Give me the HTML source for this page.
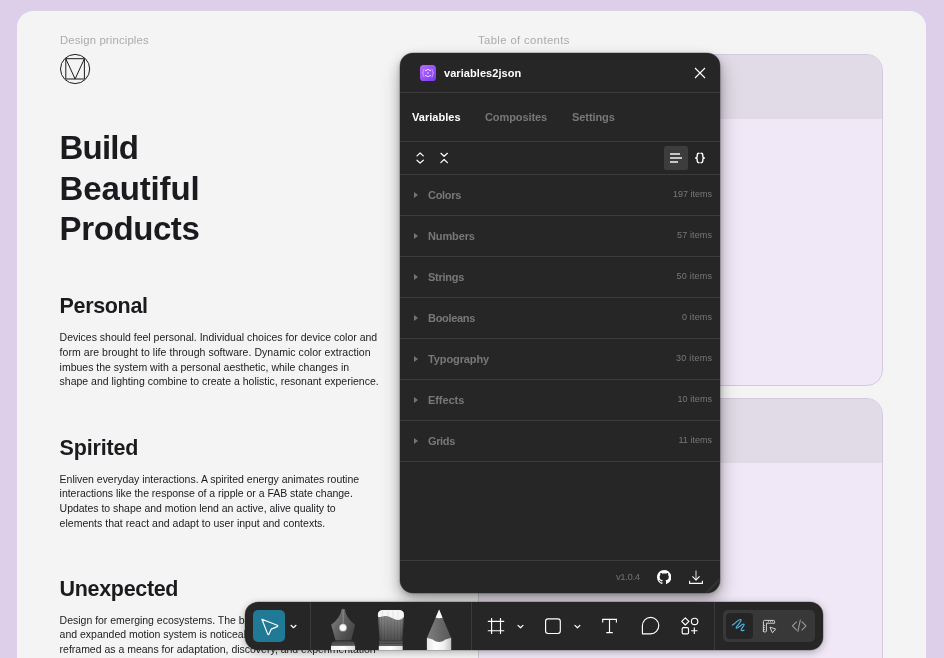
<!DOCTYPE html>
<html><head><meta charset="utf-8">
<style>
*{box-sizing:border-box;margin:0;padding:0}
html,body{width:944px;height:658px;overflow:hidden;background:#ddcfe9;font-family:"Liberation Sans",sans-serif;}
.abs{position:absolute}
#page{position:absolute;left:17px;top:11px;width:909px;height:700px;background:#f4f4f4;border-radius:16px;}
.lbl{position:absolute;font-size:11.3px;color:#acacac;white-space:nowrap;line-height:14px}
.ln{position:absolute;left:59.6px;white-space:nowrap;color:#1b1b1f}
.h1{font-size:33px;line-height:40px;font-weight:700}
.h2{font-size:21.5px;line-height:26px;font-weight:700}
.p{font-size:10.5px;line-height:14px}
.card{position:absolute;left:478px;width:405px;background:#f0e8f6;border:1px solid #d3cadc;border-radius:16px;overflow:hidden}
.card .hd{height:64px;background:#e1dae7}
#plug{position:absolute;left:400px;top:53px;width:320px;height:540px;background:#262626;border-radius:13px;box-shadow:0 0 0 .5px rgba(0,0,0,.35),0 2px 5px rgba(0,0,0,.2),0 6px 14px rgba(0,0,0,.23),0 10px 24px rgba(0,0,0,.16);overflow:hidden;color:#fff}
.sep{position:absolute;left:0;width:320px;height:1px;background:#3b3b3b}
.t{position:absolute;white-space:nowrap;font-size:11px;line-height:14px}
.b{font-weight:700}
.g{color:#787878}
.it{position:absolute;white-space:nowrap;font-size:9px;line-height:12px;color:#787878}
.tri{position:absolute;left:14px;width:0;height:0;border-left:4px solid #757575;border-top:3px solid transparent;border-bottom:3px solid transparent}
#tb{position:absolute;left:245px;top:602px;width:578px;height:48px;background:#262626;border-radius:13px;box-shadow:0 2px 8px rgba(0,0,0,.3),0 0 0 .5px rgba(0,0,0,.3);overflow:hidden}
.vs{position:absolute;top:0;width:1px;height:48px;background:#3a3a3a}
</style></head><body>
<div id="page"></div>
<div id="wrap" style="position:absolute;left:0;top:0;width:944px;height:658px;will-change:transform;opacity:.999">
<span id="l1" class="lbl" style="left:60px;top:33.4px;letter-spacing:0.161px">Design principles</span>
<span id="l2" class="lbl" style="left:478px;top:33.4px;letter-spacing:0.374px">Table of contents</span>
<svg class="abs" style="left:59px;top:53px" width="32" height="32" viewBox="0 0 32 32" fill="none" stroke="#1b1b1f" stroke-width="1"><circle cx="16.1" cy="16" r="14.6"/><path d="M6.8 5.7H25.4V26H6.8ZM6.8 5.7L16.1 26L25.4 5.7"/></svg>

<span id="h1a" class="ln h1" style="top:128px;letter-spacing:-0.820px">Build</span>
<span id="h1b" class="ln h1" style="top:168.5px;letter-spacing:-0.146px">Beautiful</span>
<span id="h1c" class="ln h1" style="top:209px;letter-spacing:-0.404px">Products</span>

<span id="h2a" class="ln h2" style="top:293px;letter-spacing:-0.346px">Personal</span>
<span id="p1a" class="ln p" style="top:330px;letter-spacing:0.001px">Devices should feel personal. Individual choices for device color and</span>
<span id="p1b" class="ln p" style="top:344.8px;letter-spacing:0.052px">form are brought to life through software. Dynamic color extraction</span>
<span id="p1c" class="ln p" style="top:359.6px;letter-spacing:0.000px">imbues the system with a personal aesthetic, while changes in</span>
<span id="p1d" class="ln p" style="top:374.4px;letter-spacing:-0.003px">shape and lighting combine to create a holistic, resonant experience.</span>

<span id="h2b" class="ln h2" style="top:434.5px;letter-spacing:-0.177px">Spirited</span>
<span id="p2a" class="ln p" style="top:471.5px;letter-spacing:-0.017px">Enliven everyday interactions. A spirited energy animates routine</span>
<span id="p2b" class="ln p" style="top:486.3px;letter-spacing:-0.024px">interactions like the response of a ripple or a FAB state change.</span>
<span id="p2c" class="ln p" style="top:501.1px;letter-spacing:-0.020px">Updates to shape and motion lend an active, alive quality to</span>
<span id="p2d" class="ln p" style="top:515.9px;letter-spacing:0.012px">elements that react and adapt to user input and contexts.</span>

<span id="h2c" class="ln h2" style="top:575.5px;letter-spacing:-0.330px">Unexpected</span>
<span id="p3a" class="ln p" style="top:612.6px;letter-spacing:-0.010px">Design for emerging ecosystems. The bold color palette</span>
<span id="p3b" class="ln p" style="top:627.4px;letter-spacing:-0.010px">and expanded motion system is noticeable, deliberately</span>
<span id="p3c" class="ln p" style="top:642.1px;letter-spacing:-0.010px">reframed as a means for adaptation, discovery, and experimentation</span>

<div class="card" style="top:54px;height:332px"><div class="hd"></div></div>
<div class="card" style="top:398px;height:332px"><div class="hd"></div></div>

<div id="plug">
  <svg class="abs" style="left:20px;top:12px" width="16" height="16" viewBox="0 0 16 16"><defs><linearGradient id="pg" x1="0" y1="0" x2="1" y2="1"><stop offset="0" stop-color="#b36dff"/><stop offset=".55" stop-color="#9550f8"/><stop offset="1" stop-color="#7838ee"/></linearGradient></defs><rect width="16" height="16" rx="3.6" fill="url(#pg)"/><g fill="none" stroke-linecap="round"><g stroke="#d2b0ff" stroke-width=".85"><path d="M4.2 4.3C3.4 4.3 3.3 4.8 3.3 5.4V6.9C3.3 7.6 2.9 8 2.3 8C2.9 8 3.3 8.4 3.3 9.1V10.6C3.3 11.2 3.4 11.7 4.2 11.7"/><path d="M11.8 4.3C12.6 4.3 12.7 4.8 12.7 5.4V6.9C12.7 7.6 13.1 8 13.7 8C13.1 8 12.7 8.4 12.7 9.1V10.6C12.7 11.2 12.6 11.7 11.8 11.7"/></g><path d="M5.3 5.6Q8 3 10.7 5.6M5.3 10.5Q8 13.1 10.7 10.5" stroke="#f1e4ff" stroke-width="1"/></g><circle cx="7.9" cy="8" r="1.05" fill="#cfa8ff"/></svg>
  <span id="ttl" class="t b" style="left:44px;top:13px;letter-spacing:0.066px">variables2json</span>
  <svg class="abs" style="left:294px;top:13.9px" width="12" height="12" viewBox="0 0 12 12" stroke="#fff" stroke-width="1.1" fill="none"><path d="M1 1L11 11M11 1L1 11"/></svg>
  <div class="sep" style="top:39px"></div>
  <span id="t1" class="t b" style="left:12px;top:57px;letter-spacing:0.034px">Variables</span>
  <span id="t2" class="t b g" style="left:85px;top:57px;letter-spacing:-0.097px">Composites</span>
  <span id="t3" class="t b g" style="left:172px;top:57px;letter-spacing:-0.072px">Settings</span>
  <div class="sep" style="top:88px"></div>
  <svg class="abs" style="left:0;top:89px" width="320" height="32" viewBox="0 89 320 32" fill="none" stroke="#fff" stroke-width="1.2" stroke-linecap="round" stroke-linejoin="round"><path d="M17 102.9L20.1 100L23.3 102.9M17 107.2L20.1 110.1L23.3 107.2"/><path d="M40.9 100.3L44.1 103.3L47.4 100.3M40.8 109.6L44.1 106.5L47.4 109.6"/><rect x="264" y="93" width="24" height="24" rx="2.5" fill="#3d3d3d" stroke="none"/><path d="M270 100.9H280M270 104.9H282M270 108.9H278" stroke="#c6c6c6" stroke-width="2" stroke-linecap="butt"/><path d="M299 100.2C297.6 100.2 297.2 100.8 297.2 101.9V103.5C297.2 104.5 296.7 105 295.6 105C296.7 105 297.2 105.5 297.2 106.5V108.1C297.2 109.2 297.6 109.8 299 109.8M301 100.2C302.4 100.2 302.8 100.8 302.8 101.9V103.5C302.8 104.5 303.3 105 304.4 105C303.3 105 302.8 105.5 302.8 106.5V108.1C302.8 109.2 302.4 109.8 301 109.8" stroke-width="1.4"/></svg>
  <div class="sep" style="top:121px"></div>
  <i class="tri" style="top:139px"></i><span id="r1" class="t b g" style="left:28px;top:135px;letter-spacing:-0.289px">Colors</span><div class="sep" style="top:162px"></div>
  <i class="tri" style="top:180px"></i><span id="r2" class="t b g" style="left:28px;top:176px;letter-spacing:-0.115px">Numbers</span><div class="sep" style="top:203px"></div>
  <i class="tri" style="top:221px"></i><span id="r3" class="t b g" style="left:28px;top:217px;letter-spacing:-0.268px">Strings</span><div class="sep" style="top:244px"></div>
  <i class="tri" style="top:262px"></i><span id="r4" class="t b g" style="left:28px;top:258px;letter-spacing:-0.317px">Booleans</span><div class="sep" style="top:285px"></div>
  <i class="tri" style="top:303px"></i><span id="r5" class="t b g" style="left:28px;top:299px;letter-spacing:-0.105px">Typography</span><div class="sep" style="top:326px"></div>
  <i class="tri" style="top:344px"></i><span id="r6" class="t b g" style="left:28px;top:340px;letter-spacing:-0.065px">Effects</span><div class="sep" style="top:367px"></div>
  <i class="tri" style="top:385px"></i><span id="r7" class="t b g" style="left:28px;top:381px;letter-spacing:-0.359px">Grids</span><div class="sep" style="top:408px"></div>
  <span id="i1" class="it" style="left:273px;top:135px;letter-spacing:-0.004px">197 items</span>
  <span id="i2" class="it" style="left:277px;top:176px;letter-spacing:0.141px">57 items</span>
  <span id="i3" class="it" style="left:276.6px;top:217px;letter-spacing:0.199px">50 items</span>
  <span id="i4" class="it" style="left:282px;top:258px;letter-spacing:0.164px">0 items</span>
  <span id="i5" class="it" style="left:276px;top:299px;letter-spacing:0.283px">30 items</span>
  <span id="i6" class="it" style="left:277.5px;top:340px;letter-spacing:0.069px">10 items</span>
  <span id="i7" class="it" style="left:278.5px;top:381px;letter-spacing:0.020px">11 items</span>
  <div class="sep" style="top:507px"></div>
  <span id="ver" class="it" style="left:216px;top:517.8px;font-size:9.5px;color:#727272;letter-spacing:-0.378px">v1.0.4</span>
  <svg class="abs" style="left:256.9px;top:516.6px" width="14.4" height="14.4" viewBox="0 0 16 16" fill="#fff"><path d="M8 0C3.58 0 0 3.58 0 8c0 3.54 2.29 6.53 5.47 7.59.4.07.55-.17.55-.38 0-.19-.01-.82-.01-1.49-2.01.37-2.53-.49-2.69-.94-.09-.23-.48-.94-.82-1.13-.28-.15-.68-.52-.01-.53.63-.01 1.08.58 1.23.82.72 1.21 1.87.87 2.33.66.07-.52.28-.87.51-1.07-1.78-.2-3.64-.89-3.64-3.95 0-.87.31-1.59.82-2.15-.08-.2-.36-1.02.08-2.12 0 0 .67-.21 2.2.82.64-.18 1.32-.27 2-.27.68 0 1.36.09 2 .27 1.53-1.04 2.2-.82 2.2-.82.44 1.1.16 1.92.08 2.12.51.56.82 1.27.82 2.15 0 3.07-1.87 3.75-3.65 3.95.29.25.54.73.54 1.48 0 1.07-.01 1.93-.01 2.2 0 .21.15.46.55.38A8.013 8.013 0 0 0 16 8c0-4.42-3.58-8-8-8z"/></svg>
  <svg class="abs" style="left:286px;top:514px" width="20" height="20" viewBox="286 514 20 20" fill="none" stroke="#fff" stroke-width="1.1" stroke-linecap="square"><path d="M296 518V526.6" stroke="#cfcfcf"/><path d="M292.8 523.8L296 527L299.2 523.8"/><path d="M289.6 528.2V530.4H302.4V528.2"/></svg>
  <svg class="abs" style="left:300px;top:520px" width="20" height="20" viewBox="0 0 20 20"><path d="M6 20L20 6" stroke="#333" stroke-width="2.2"/></svg>
</div>

<div id="tb">
  <div class="abs" style="left:8px;top:8px;width:32px;height:32px;border-radius:5px;background:#207a96"></div>
  <div class="vs" style="left:65px"></div>
  <div class="vs" style="left:226px"></div>
  <div class="vs" style="left:469px"></div>
  <div class="abs" style="left:478px;top:8px;width:92px;height:32px;border-radius:5px;background:#383838"></div>
  <div class="abs" style="left:481px;top:10.6px;width:26.5px;height:26.6px;border-radius:4px;background:#252525"></div>
  <svg class="abs" style="left:0;top:0" width="578" height="48" viewBox="0 0 578 48" fill="none" stroke="#fff" stroke-width="1.15" stroke-linecap="round" stroke-linejoin="round">
  <defs>
   <linearGradient id="nib" x1="0" y1="0" x2="1" y2="0"><stop offset="0" stop-color="#8a8a8a"/><stop offset=".45" stop-color="#6e6e6e"/><stop offset="1" stop-color="#565656"/></linearGradient>
   <linearGradient id="nibv" x1="0" y1="0" x2="0" y2="1"><stop offset="0" stop-color="#000" stop-opacity="0"/><stop offset="1" stop-color="#000" stop-opacity=".28"/></linearGradient>
   <linearGradient id="col" x1="0" y1="0" x2="0" y2="1"><stop offset="0" stop-color="#464646"/><stop offset="1" stop-color="#5a5a5a"/></linearGradient>
   <linearGradient id="wb" x1="0" y1="0" x2="1" y2="0"><stop offset="0" stop-color="#f2f2f2"/><stop offset=".5" stop-color="#ffffff"/><stop offset="1" stop-color="#dcdcdc"/></linearGradient>
   <linearGradient id="br" x1="0" y1="0" x2="0" y2="1"><stop offset="0" stop-color="#8c8c8c"/><stop offset=".35" stop-color="#7a7a7a"/><stop offset="1" stop-color="#4e4e4e"/></linearGradient>
   <linearGradient id="fer" x1="0" y1="0" x2="0" y2="1"><stop offset="0" stop-color="#3a3a3a"/><stop offset=".3" stop-color="#5c5c5c"/><stop offset=".5" stop-color="#3c3c3c"/><stop offset=".75" stop-color="#606060"/><stop offset="1" stop-color="#444"/></linearGradient>
   <linearGradient id="cone" x1="0" y1="0" x2="1" y2="0"><stop offset="0" stop-color="#808080"/><stop offset=".5" stop-color="#6a6a6a"/><stop offset="1" stop-color="#585858"/></linearGradient>
   <linearGradient id="pb" x1="0" y1="0" x2="1" y2="0"><stop offset="0" stop-color="#e6e6e6"/><stop offset=".35" stop-color="#ffffff"/><stop offset=".7" stop-color="#f0f0f0"/><stop offset="1" stop-color="#c4c4c4"/></linearGradient>
   <radialGradient id="hole"><stop offset="0" stop-color="#fff"/><stop offset=".7" stop-color="#f4f4f4"/><stop offset="1" stop-color="#d8d8d8" stop-opacity=".6"/></radialGradient>
  </defs>
  <!-- cursor -->
  <path d="M16.9 17.3L32.3 23.3Q33.4 23.9 32.3 24.6L26.3 27.1L23.9 32.2Q23.2 33.2 22.7 32.1Z" stroke-width="1.2"/>
  <path d="M46 23.3L48.5 25.7L51 23.3" stroke-width="1.2"/>
  <!-- pen -->
  <g stroke="none">
   <path d="M96.5 7.3Q98.2 6.2 99.9 7.3C100.6 13.5 104 18 110.1 22.8L106.1 38.2H90.6L86.2 22.8C92.4 18 95.8 13.5 96.5 7.3Z" fill="url(#nib)"/>
   <path d="M96.5 7.3Q98.2 6.2 99.9 7.3C100.6 13.5 104 18 110.1 22.8L106.1 38.2H90.6L86.2 22.8C92.4 18 95.8 13.5 96.5 7.3Z" fill="url(#nibv)"/>
   <rect x="97.6" y="8" width="1.1" height="15" fill="#9a9a9a" opacity=".7"/>
   <circle cx="98" cy="25.7" r="3.9" fill="url(#hole)"/>
   <path d="M86.4 43.9V42.8C86.4 40.2 88.4 39.3 91.4 39.3H104.9C107.9 39.3 109.9 40.2 109.9 42.8V43.9Z" fill="url(#col)"/>
   <rect x="86" y="43.9" width="24.1" height="5" fill="url(#wb)"/>
  </g>
  <!-- brush -->
  <g stroke="none">
   <path d="M132.9 13.2C132.9 9.6 134.8 8 138.6 8H153.4C157.2 8 159 9.6 159 13.2L157.3 38.7H134.5Z" fill="url(#br)"/>
   <g stroke="#000" stroke-opacity=".13" stroke-width=".7"><path d="M136.5 14V38M139.5 13V38M142.8 13V38M146 14V38M149.3 15V38M152.5 16V38M155.5 15V38"/></g>
   <path d="M132.9 13.2C132.9 9.6 134.8 8 138.6 8H153.4C157.2 8 159 9.6 159 13.2L158.8 15.2C156.5 17.5 153.5 18.6 150.5 17.6C147 16.3 144.5 13.6 140.5 13.9C137.5 14.1 135.5 15.2 133.1 14.9Z" fill="#f6f6f6"/>
   <g stroke="#bdbdbd" stroke-opacity=".5" stroke-width=".6"><path d="M137.5 8.3V14M142.8 8.2V14M148 8.2V16M153 8.3V17.5"/></g>
   <path d="M132.9 14.8L134.5 38.7H136L134.6 14.9ZM159 15L157.3 38.7H155.8L157.4 15.6Z" fill="#000" opacity=".18"/><rect x="134.1" y="38.7" width="23.6" height="5.2" fill="url(#fer)"/>
   <rect x="133.8" y="43.9" width="23.9" height="5" fill="url(#wb)"/>
  </g>
  <!-- pencil -->
  <g stroke="none">
   <path d="M181.9 35.7H206.2V48H181.9Z" fill="url(#pb)"/>
   <path d="M194.1 7.6L206.2 35.9C204.3 36.1 202.8 36.8 201.2 37.3C199.4 37.6 198.6 39.9 194.1 40C189.6 39.9 188.8 37.6 187 37.3C185.4 36.8 183.8 36.1 181.9 35.9Z" fill="url(#cone)"/>
   <path d="M194.1 7.4L197.6 15.7Q194.1 16.6 190.6 15.7Z" fill="#f7f7f7"/>
  </g>
  <!-- frame -->
  <path d="M242.8 19.4H259.2M242.8 28.7H259.2M246.6 16V32M255.5 16V32" stroke-linecap="butt"/>
  <path d="M273 23.4L275.5 25.8L278 23.4" stroke-width="1.2"/>
  <rect x="300.6" y="16.8" width="14.7" height="14.7" rx="2.4"/>
  <path d="M329.9 23.4L332.4 25.8L334.9 23.4" stroke-width="1.2"/>
  <!-- T -->
  <path d="M357.7 20.6V17.4H371.4V20.6M364.5 17.4V30.6M361.3 30.6H367.8" stroke-linecap="butt" stroke-linejoin="miter"/>
  <!-- bubble -->
  <path d="M397.4 31.8V23.6A8.2 8.2 0 1 1 405.6 31.8Z"/>
  <!-- shapes -->
  <path d="M440.3 15.8L443.9 19.4L440.3 23L436.7 19.4Z"/>
  <circle cx="449.6" cy="19.4" r="3.2"/>
  <rect x="437.2" y="25.6" width="6.3" height="6.3" rx="1.2"/>
  <path d="M449.3 25.5V31.9M446.1 28.7H452.5" stroke-linecap="butt"/>
  <!-- scribble -->
  <path d="M487.4 23.1C490 21.6 494.2 16.6 495.9 17.6C497.6 18.8 490 25.2 491.3 26.2C492.6 27.1 497.6 21 499 22.2C500.2 23.4 495 27.4 496.2 28.4C497 29 498.2 28.4 499 28.2" stroke="#4db6e2" stroke-width="1.15"/>
  <!-- ruler -->
  <g stroke="#d2d2d2" stroke-width="1">
   <path d="M518.4 29.2V19.4Q518.4 18.4 519.4 18.4H528.6Q529.6 18.4 529.6 19.4V21.2H521.4V29.2Q521.4 29.9 520.7 29.9H519.1Q518.4 29.9 518.4 29.2Z"/>
   <path d="M525.3 25.3L530.4 26.9Q531.2 27.2 530.5 27.8L528.8 28.8L527.9 30.5Q527.4 31.2 527.1 30.4Z"/>
   <path d="M523.5 18.6V19.6M525.5 18.6V19.6M527.5 18.6V19.6M518.6 23.5H519.6M518.6 25.5H519.6M518.6 27.5H519.6" stroke-width=".7"/>
  </g>
  <!-- code -->
  <path d="M551.5 19.9L547.4 23.9L551.5 27.9M557 19.9L561 23.9L557 27.9M555.3 18L552.9 29.4" stroke="#9c9c9c" stroke-width="1.1"/>
</svg>
</div>
</div>
</body></html>
